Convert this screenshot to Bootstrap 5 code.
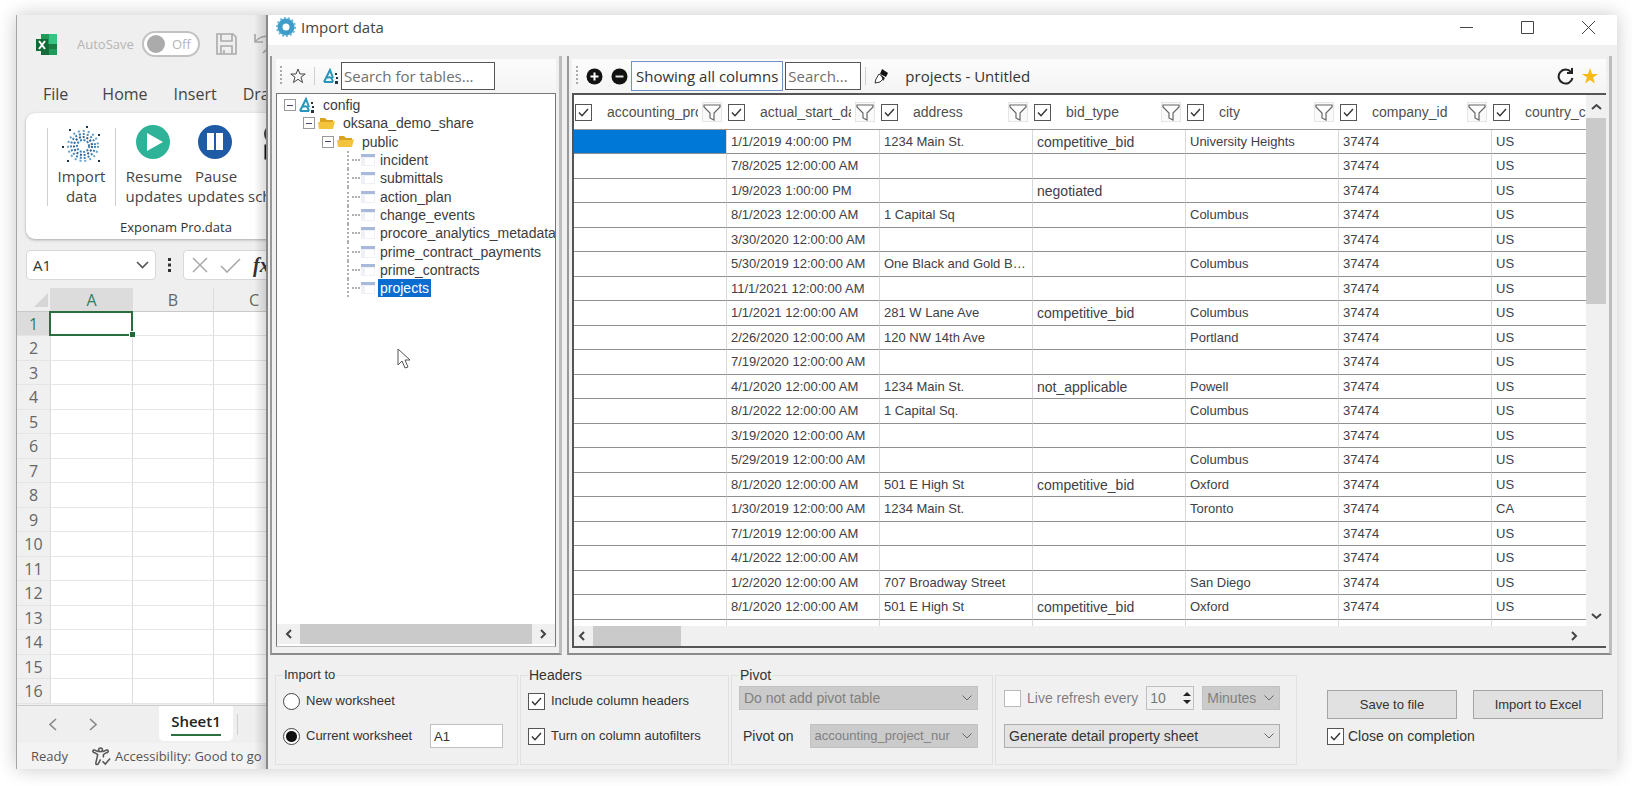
<!DOCTYPE html>
<html lang="en">
<head>
<meta charset="utf-8">
<meta name="viewport" content="width=device-width, initial-scale=1">
<title>Import data</title>
<link href="https://cdn.jsdelivr.net/npm/bootstrap@5.3.0/dist/css/bootstrap.min.css" rel="stylesheet">
<style>
:root{--ui:"Open Sans","Noto Sans",sans-serif;--grid:"Liberation Sans",Arial,sans-serif}
body{font-family:var(--ui);font-size:14px;line-height:18px;color:#333;background:#fff;padding:15px 15px 17px 16px}
button,input,select{font-family:inherit;font-size:inherit;line-height:inherit;color:inherit}
.frame{box-shadow:0 0 18px rgba(0,0,0,.22);background:#f0f0f0}
.mw0{min-width:0}.mh0{min-height:0}
svg{display:block;flex:none}

/* spreadsheet behind */
.book{width:250px;border-left:1px solid #a5a5a5;background:#efefef;position:relative}
.book::after{content:"";position:absolute;inset:0 0 0 auto;width:12px;background:linear-gradient(90deg,transparent,rgba(0,0,0,.14));pointer-events:none}
.topbar{height:58px;padding-left:19px;color:#b5b5b5;font-size:13px}
.topbar .cap{margin:0 8px 0 20px}
.autosave{width:58px;height:26px;border:2px solid #c2c2c2;border-radius:13px;background:#fff;padding:0 7px 0 3px;color:#b5b5b5}
.knob{width:18px;height:18px;border-radius:50%;background:#ababab}
.tabs{height:40px;padding:12px 0 0 26px;gap:26px;font-size:16px;color:#444}
.tabs a,.sheet a{color:inherit;text-decoration:none}
.ribbon{height:126px;margin-left:9px;background:#fff;border-radius:9px 0 0 9px;box-shadow:0 1px 3px rgba(0,0,0,.3);width:300px}
.ribbon button{border:0;background:none;padding:0;font-size:15px;line-height:20px;color:#444}
.ribbon .tools{padding:11px 0 0 21px}
.ribbon .tools svg{margin-bottom:2px}
.sep{width:1px;background:#cfcfcf}
.caption-line{font-size:13px;padding-top:12px;line-height:18px}
.fbar{padding:11px 0 0 9px;height:49px}
.namebox{width:130px;height:30px;border:1px solid #d8d8d8;border-radius:4px;background:#fff;padding:0 6px;font-size:15px;color:#333}
.fx{width:140px;height:30px;border:1px solid #d8d8d8;border-radius:4px;background:#fff}
.cells{table-layout:fixed;width:278px;border-collapse:separate;border-spacing:0;background:#fff}
.cells th{background:#f0f0f0;font-weight:400;font-size:16px;text-align:center;padding:0;color:#666;line-height:22px;border-right:1px solid #ddd;border-bottom:1px solid #e4e4e4}
.cells thead th{height:24px;border-bottom-color:#c9c9c9;background:#efefef}
.cells td{height:24px;padding:0;border-right:1px solid #dcdcdc;border-bottom:1px solid #e6e6e6}
.cells tbody tr:nth-child(2n) td{height:25px}
.cells .on{background:#dcdcdc;color:#2f7d63}
.cells td.pick{position:relative}
.pick::before{content:"";position:absolute;inset:-1px -1px -1px -2px;border:2px solid #2a6e3f}
.pick::after{content:"";position:absolute;right:-3px;bottom:-2px;width:5px;height:5px;background:#1f6b38;outline:1px solid #fff}
.sheet{height:38px;border-top:1px solid #ccc}
.sheet .active-tab{background:#fff;width:74px;height:35px;border-radius:0 0 5px 5px;font-size:15px;font-weight:600;color:#222;padding-top:5px}
.sheet .active-tab a{border-bottom:2px solid #2c7040;padding-bottom:3px;line-height:20px}
.sheet .rest{width:28px}
.status{font-size:13px;height:26px;color:#555;padding:0 0 0 14px;background:#f3f3f3}

/* dialog */
.dialog{border-left:2px solid #888;background:#f0f0f0}
.titlebar{height:31px;background:#fff;padding:0 22px 6px 8px;font-size:15px;color:#444}
.titlebar button,.plain{border:0;background:none;padding:0;color:#333}
.panes{padding:11px 5px 0 2px}
.pane{border:solid #bdbdbd;border-width:0 3px 2px 2px;border-left-color:#999;border-bottom-color:#8a8a8a}
.pane-l{width:292px;padding:3px 3px 6px 4px}
.pane-r{padding:3px 3px 5px 3px;margin-left:5px}
.bar{height:34px;background:linear-gradient(#fcfcfc,#f4f4f4);font-size:15px;color:#333}
.grip{width:2px;height:20px;background:repeating-linear-gradient(#aaa 0 2px,transparent 2px 4px)}
.find{border:1px solid #555;background:#fff;height:28px;padding:0 2px;border-radius:0;font-size:15px}
.find::placeholder{color:#707070;opacity:1}
.find.wide{width:154px;margin-left:2px}
.find.slim{width:76px;margin-left:2px}
.showing{height:30px;border:1px solid #6f93c4;background:#fbfdff;padding:0 4px;margin-left:3px;white-space:nowrap}
.treebox{border:1px solid #777;border-bottom-color:#bbb;background:#fff;padding-bottom:2px}
.tree{font-family:var(--grid);font-size:14px;line-height:18px;color:#3c3c3c;list-style:none;margin:0;padding:2px 0 0 7px;white-space:nowrap}
.tree li{height:18px;display:flex;align-items:center}
.tree li:nth-child(3n){height:19px}
.tree .l1{padding-left:19px}.tree .l2{padding-left:38px}
.tree .leaf{margin-left:63px;border-left:2px dotted #b0b0b0;padding-left:3px}
.tree .leaf::before{content:"";width:8px;border-top:2px dotted #b0b0b0;margin-right:1px;flex:none}
.tree .leaf span{padding:0 2px;margin-left:3px}
.tree .leaf .cur{background:#0a6cd0;color:#fff}
.exp{width:12px;height:12px;border:1px solid #999;padding:0;background:#fff;display:flex;align-items:center;margin-right:3px}
.exp::before{content:"";height:1px;background:#447;flex:1;margin:0 2px}
.hs{height:20px;background:#f0f0f0;padding:0 8px}
.thumb{background:#cacaca}
.gridbox{border:solid #555;border-width:2px 0 2px 2px}
.dg{font-family:var(--grid);table-layout:fixed;width:1071px;border-collapse:separate;border-spacing:0;font-size:13px;line-height:18px;color:#404048}
.dg th{height:35px;font-size:14px;font-weight:400;padding:0 5px 0 1px;border-bottom:1px solid #999;color:#505050}
.dg th label{overflow:hidden;white-space:nowrap;margin:0 4px 0 15px}
.dg td{height:24px;padding:0 5px 0 4px;border-bottom:1px solid #8f8f8f;border-right:1px solid #d8d8d8;overflow:hidden;text-overflow:ellipsis;white-space:nowrap}
.dg tbody tr:nth-child(2n) td{height:25px}
.dg td:nth-child(4){font-size:14px}
.dg td.sel{background:#0078d7}
.fun{width:20px;height:20px;border:1px solid #e6e6e6;background:#fafafa;padding:0;display:flex;justify-content:center}
.vs{width:20px;background:#f0f0f0;padding:8px 0 6px}
.tick{appearance:none;flex:none;width:17px;height:17px;margin:0;border:1px solid #555;background:#fff}
.tick:checked{background:#fff url("data:image/svg+xml,%3Csvg xmlns='http://www.w3.org/2000/svg' viewBox='0 0 15 15'%3E%3Cpath d='M3 7.5l3 3.2L12 4' fill='none' stroke='%23333' stroke-width='1.4'/%3E%3C/svg%3E")}
.tick:disabled{border-color:#bbb}
.dot{appearance:none;flex:none;width:17px;height:17px;margin:0;border:1px solid #444;border-radius:50%;background:#fff}
.dot:checked{background:radial-gradient(circle,#111 0 5px,#fff 6px)}

/* options */
.opts{font-family:var(--grid);font-size:14px;color:#333;padding:11px 14px 4px 7px}
fieldset.grp{border:1px solid #e1e1e1;margin:9px 2px 0 0;padding:0;height:90px;position:relative}
.grp legend{font-size:14px;line-height:18px;width:auto;float:none;margin:-10px 0 0 7px;padding:0 1px;position:absolute;background:#f0f0f0}
.small-txt,.small-txt .fit{font-size:13px}
.grp .body{padding:13px 6px 0 7px}
.grp .high{padding-top:10px}
.line{height:24px;margin-bottom:11px}
.high .line{margin-bottom:14px}
.line label{margin-left:6px;white-space:nowrap}
.cmb{appearance:none;height:24px;border:1px solid #acacac;border-radius:0;background:#e3e3e3 url("data:image/svg+xml,%3Csvg xmlns='http://www.w3.org/2000/svg' width='12' height='8'%3E%3Cpath d='M1.5 1.5L6 6l4.5-4.5' fill='none' stroke='%23666'/%3E%3C/svg%3E") no-repeat right 4px center;padding:0 16px 0 4px;min-width:0}
.cmb:disabled{background-color:#cbcbcb;border-color:#c2c2c2;color:#808080;opacity:1}
.cmb.col-pick{font-size:13px}
.box{border:1px solid #c0c0c0;background:#fff;height:24px;padding:0 3px}
.num{appearance:textfield;width:34px;border:0;background:transparent;padding:0 3px;color:#777}
.num::-webkit-inner-spin-button{display:none}
.act{width:130px;height:29px;border:1px solid #a5a5a5;background:#e1e1e1;font-size:13px;color:#333}
.pointer{position:absolute;left:129px;top:333px}
</style>
</head>
<body class="vh-100 overflow-hidden">
<div class="frame h-100 d-flex overflow-hidden">

<section class="book d-flex flex-column flex-shrink-0 overflow-hidden">
  <div class="topbar d-flex align-items-center flex-shrink-0">
    <svg width="21" height="21" viewBox="0 0 21 21"><path d="M5 0h16v21H5z" fill="#1f9a58"/><path d="M13 0h8v10h-8z" fill="#35c481"/><path d="M5 10h8v11H5z" fill="#176b3c"/><path d="M13 10h8v5h-8z" fill="#1d7a45"/><path d="M0 5h12v12H0z" fill="#0f6a36"/><path d="M3 7l6 8M9 7l-6 8" stroke="#fff" stroke-width="2"/></svg>
    <span class="cap text-nowrap" id="as">AutoSave</span>
    <button class="autosave d-flex align-items-center justify-content-between flex-shrink-0" aria-labelledby="as"><span class="knob"></span>Off</button>
    <svg class="ms-3" width="21" height="22" viewBox="0 0 21 22" fill="none" stroke="#aaa" stroke-width="1.600"><path d="M1 1h16l3 3v17H1zM5 1v7h11V1M5 21v-8h11v8M8 17v4"/></svg>
    <svg class="ms-3" width="24" height="24" viewBox="0 0 24 24" fill="none" stroke="#aaa" stroke-width="1.700"><path d="M2 2v8h8M2 10C8 3 16 3 18 8s-4 9-8 13"/></svg>
  </div>
  <nav class="tabs d-flex flex-shrink-0"><a class="me-2" href="#">File</a><a href="#">Home</a><a href="#">Insert</a><a href="#">Draw</a></nav>
  <div class="ribbon flex-shrink-0">
    <div class="tools d-flex">
      <i class="sep mt-1"></i>
      <button style="width:67px"><svg class="mx-auto" width="40" height="40" viewBox="0 0 40 40" fill="none" stroke="#3d7fb5"><g stroke-width="2"><circle cx="21" cy="22" r="6" stroke-dasharray="2 1.500"/><circle cx="21" cy="22" r="9" stroke-dasharray="2 1.800" stroke="#315f8f"/><circle cx="21" cy="22" r="12" stroke-dasharray="2 2"/><circle cx="21" cy="22" r="15" stroke-dasharray="2 3" stroke="#67a3ce"/></g><path d="M25 2v2M8 5v2M37 10v2M1 22v2M37 36v2M6 36v2" stroke="#234" stroke-width="2"/></svg>Import<br>data</button>
      <i class="sep mt-1"></i>
      <button class="ms-2" style="width:60px"><svg class="mx-auto" width="40" height="40" viewBox="0 0 40 40"><circle cx="19" cy="18" r="17" fill="#2eb398"/><path d="M13 9v18l16-9z" fill="#fff"/></svg>Resume<br>updates</button>
      <button style="width:64px"><svg class="mx-auto" width="40" height="40" viewBox="0 0 40 40"><circle cx="19" cy="18" r="17" fill="#1f5aa6"/><path d="M11 9h7v17h-7zM20 9h7v17h-7z" fill="#fff"/></svg>Pause<br>updates</button>
      <button style="width:60px"><svg class="mx-auto" width="40" height="40" viewBox="0 0 40 40" fill="none" stroke="#444" stroke-width="2"><circle cx="16" cy="10" r="9"/><path d="M8 22h24v12H8z" stroke="#111" stroke-width="3"/></svg>Set<br>schedule</button>
    </div>
    <div class="caption-line text-center">Exponam Pro.data</div>
  </div>
  <div class="fbar d-flex flex-shrink-0">
    <button class="namebox d-flex align-items-center justify-content-between flex-shrink-0">A1<svg width="13" height="8" viewBox="0 0 13 8" fill="none" stroke="#555" stroke-width="1.600"><path d="M1 1l5.500 5.500L12 1"/></svg></button>
    <svg class="mx-2 mt-2" width="11" height="14" viewBox="0 0 11 14" fill="#333"><path d="M4 0h3v3H4zM4 5.500h3v3H4zM4 11h3v3H4z"/></svg>
    <div class="fx d-flex align-items-center flex-shrink-0 ps-2 gap-2">
      <svg width="16" height="16" viewBox="0 0 16 16" stroke="#aaa" stroke-width="1.500"><path d="M1 1l14 14M15 1L1 15"/></svg>
      <svg class="ms-1" width="21" height="15" viewBox="0 0 21 15" fill="none" stroke="#aaa" stroke-width="1.600"><path d="M1 8l6 6L20 1"/></svg>
      <span class="ms-1 fs-5 fst-italic fw-bold" style="font-family:'Liberation Serif',serif">fx</span>
    </div>
  </div>
  <div class="flex-fill mh0 overflow-hidden"><table class="cells" id="cells"><colgroup><col style="width:34px"><col style="width:82px"><col style="width:81px"><col></colgroup>
    <thead><tr><th><svg class="ms-auto" width="18" height="18" viewBox="0 0 18 18"><path d="M16 2v14H2z" fill="#d6d6d6"/></svg></th><th class="on">A</th><th>B</th><th>C</th></tr></thead><tbody></tbody></table></div>
  <div class="sheet d-flex flex-shrink-0">
    <button class="plain ps-4 ms-2" aria-label="Previous sheet"><svg width="8" height="13" viewBox="0 0 8 13" fill="none" stroke="#888" stroke-width="1.600"><path d="M7 1L1 6.500 7 12"/></svg></button>
    <button class="plain ps-4 ms-2" aria-label="Next sheet"><svg width="8" height="13" viewBox="0 0 8 13" fill="none" stroke="#888" stroke-width="1.600"><path d="M1 1l6 5.500L1 12"/></svg></button>
    <div class="active-tab text-center ms-auto"><a href="#">Sheet1</a></div><i class="sep my-2 ms-1"></i><span class="rest"></span>
  </div>
  <div class="status d-flex align-items-center flex-shrink-0 text-nowrap"><span>Ready</span>
    <svg class="ms-4 me-1" width="19" height="19" viewBox="0 0 20 20" fill="none" stroke="#555" stroke-width="1.600"><circle cx="9" cy="3" r="2"/><path d="M7 5L2 3C0 4 1 6 3 6l3 2-2 9c0 2 2 2 3 0l2-4M11 5l5-2c2 1 1 3-1 3l-3 2v3M11 15l3 3 5-6"/></svg>Accessibility: Good to go</div>
</section>

<main class="dialog d-flex flex-column flex-fill mw0 position-relative">
  <header class="titlebar d-flex align-items-center">
    <svg width="21" height="21" viewBox="0 0 21 21" fill="none"><circle cx="10" cy="10" r="6" stroke="#3d9cc8" stroke-width="5"/><circle cx="10" cy="10" r="9" stroke="#6ab8dc" stroke-width="2" stroke-dasharray="2 2"/></svg>
    <span class="ms-1 me-auto">Import data</span>
    <button aria-label="Minimize"><svg width="13" height="13" viewBox="0 0 13 13" stroke="#444"><path d="M0 6.500h13"/></svg></button>
    <button class="mx-5" aria-label="Maximize"><svg width="13" height="13" viewBox="0 0 13 13" stroke="#444" fill="none"><path d="M.5.5h12v12H.5z"/></svg></button>
    <button aria-label="Close"><svg width="13" height="13" viewBox="0 0 13 13" stroke="#444"><path d="M0 0l13 13M13 0L0 13"/></svg></button>
  </header>

  <div class="panes d-flex flex-fill mh0">
    <section class="pane pane-l d-flex flex-column flex-shrink-0">
      <div class="bar d-flex align-items-center ps-1 flex-shrink-0">
        <i class="grip"></i>
        <button class="plain ms-2" aria-label="Favorites"><svg width="16" height="16" viewBox="0 0 16 16" fill="none" stroke="#444"><path d="M8 1l2 5h5.200L11 9.200l1.600 5.300L8 11.300l-4.600 3.200L5 9.200.8 6H6z"/></svg></button>
        <i class="sep ms-2 my-2 align-self-stretch"></i>
        <svg class="ms-2" width="16" height="17" viewBox="0 0 16 17" fill="none"><path d="M1 14L7 2l3 8M1 14h9M4 10c3-2 5 0 6 4" stroke="#2796bd" stroke-width="2"/><path d="M12 5h2v2h-2zM13 9h2v2h-2zM12 13h3v3h-3z" fill="#234"/></svg>
        <input class="find wide" placeholder="Search for tables..." aria-label="Search for tables">
      </div>
      <div class="treebox d-flex flex-column flex-fill mh0">
        <ul class="tree flex-fill overflow-hidden" id="tree"></ul>
        <div class="hs d-flex align-items-center">
          <svg width="7" height="10" viewBox="0 0 7 10" fill="none" stroke="#444" stroke-width="2"><path d="M6 1L2 5l4 4"/></svg>
          <div class="thumb flex-fill align-self-stretch mx-2"></div>
          <svg width="7" height="10" viewBox="0 0 7 10" fill="none" stroke="#444" stroke-width="2"><path d="M1 1l4 4-4 4"/></svg>
        </div>
      </div>
    </section>

    <section class="pane pane-r d-flex flex-column flex-fill mw0">
      <div class="bar d-flex align-items-center ps-1 pe-2 flex-shrink-0">
        <i class="grip"></i>
        <button class="plain ms-2" aria-label="Check all"><svg width="17" height="17" viewBox="0 0 17 17"><circle cx="8.500" cy="8.500" r="8" fill="#111"/><path d="M8.500 4.500v8M4.500 8.500h8" stroke="#fff" stroke-width="2"/></svg></button>
        <button class="plain ms-2" aria-label="Uncheck all"><svg width="17" height="17" viewBox="0 0 17 17"><circle cx="8.500" cy="8.500" r="8" fill="#111"/><path d="M4.500 8.500h8" stroke="#ddd" stroke-width="2"/></svg></button>
        <button class="showing">Showing all columns</button>
        <input class="find slim" placeholder="Search..." aria-label="Search columns">
        <i class="sep ms-1 my-2 align-self-stretch"></i>
        <button class="plain ms-2" aria-label="Rename"><svg width="15" height="15" viewBox="0 0 15 15"><path d="M8 0l6 4-2 4-6-3z" fill="#111"/><path d="M5 5l5 4-4 4-5 1 1-4z" fill="#fff" stroke="#333"/><path d="M7 6l4 3-2 3z" fill="#222"/></svg></button>
        <span class="ms-3 me-auto text-nowrap">projects - Untitled</span>
        <button class="plain me-2" aria-label="Refresh"><svg width="17" height="17" viewBox="0 0 17 17" fill="none" stroke="#222" stroke-width="2"><path d="M14 4A7 7 0 1 0 15.500 10M15 0v5h-5"/></svg></button>
        <button class="plain" aria-label="Favorite"><svg width="16" height="16" viewBox="0 0 16 16"><path d="M8 0l2 6h6l-5 3.500 2 6L8 12l-5 3.500 2-6L0 6h6z" fill="#f8b912"/></svg></button>
      </div>
      <div class="gridbox d-flex flex-column flex-fill mh0">
        <div class="d-flex flex-fill mh0">
          <div class="bg-white flex-fill overflow-hidden mw0"><table class="dg" id="dg"><thead><tr></tr></thead><tbody></tbody></table></div>
          <div class="vs d-flex flex-column align-items-center flex-shrink-0">
            <svg width="11" height="7" viewBox="0 0 11 7" fill="none" stroke="#444" stroke-width="2"><path d="M1 6l4.500-4L10 6"/></svg>
            <div class="thumb w-100 mt-2" style="height:36%"></div>
            <svg class="mt-auto" width="11" height="7" viewBox="0 0 11 7" fill="none" stroke="#444" stroke-width="2"><path d="M1 1l4.500 4L10 1"/></svg>
          </div>
        </div>
        <div class="hs d-flex align-items-center flex-shrink-0 ps-1 pe-4">
          <svg width="7" height="10" viewBox="0 0 7 10" fill="none" stroke="#444" stroke-width="2"><path d="M6 1L2 5l4 4"/></svg>
          <div class="thumb align-self-stretch ms-2 me-auto" style="width:88px"></div>
          <svg class="me-1" width="7" height="10" viewBox="0 0 7 10" fill="none" stroke="#444" stroke-width="2"><path d="M1 1l4 4-4 4"/></svg>
        </div>
      </div>
    </section>
  </div>

  <form class="opts d-flex flex-shrink-0">
    <fieldset class="grp small-txt" style="width:243px"><legend class="fit">Import to</legend><div class="body">
      <div class="line d-flex align-items-center"><input class="dot" type="radio" name="dest" id="nw"><label for="nw">New worksheet</label></div>
      <div class="line d-flex align-items-center"><input class="dot" type="radio" name="dest" id="cw" checked><label for="cw">Current worksheet</label><input class="box ms-auto me-2" style="width:73px" value="A1" aria-label="Cell"></div>
    </div></fieldset>
    <fieldset class="grp small-txt" style="width:209px"><legend>Headers</legend><div class="body">
      <div class="line d-flex align-items-center"><input class="tick" type="checkbox" id="ich" checked><label for="ich">Include column headers</label></div>
      <div class="line d-flex align-items-center"><input class="tick" type="checkbox" id="caf" checked><label for="caf">Turn on column autofilters</label></div>
    </div></fieldset>
    <fieldset class="grp" style="width:262px"><legend>Pivot</legend><div class="body high">
      <div class="line d-flex"><select class="cmb w-100 me-2" disabled aria-label="Pivot table"><option>Do not add pivot table</option></select></div>
      <div class="line d-flex align-items-center"><label class="ms-1 me-3" for="pv">Pivot on</label><select class="cmb col-pick flex-fill me-2 w-50" id="pv" disabled><option>accounting_project_nur</option></select></div>
    </div></fieldset>
    <fieldset class="grp" style="width:302px"><div class="body high ps-2 pe-3">
      <div class="line d-flex align-items-center"><input class="tick" type="checkbox" id="lr" disabled><label for="lr" class="text-black-50">Live refresh every</label>
        <span class="box d-flex ms-2 bg-transparent p-0"><input class="num" type="number" value="10" disabled aria-label="Interval"><svg width="12" height="22" viewBox="0 0 12 22" fill="#222"><path d="M2 9l4-4 4 4zM2 13l4 4 4-4z"/></svg></span>
        <select class="cmb ms-2 flex-fill" disabled aria-label="Unit"><option>Minutes</option></select></div>
      <div class="line d-flex"><select class="cmb w-100" aria-label="Detail"><option>Generate detail property sheet</option></select></div>
    </div></fieldset>
    <div class="ms-auto pt-3">
      <div class="d-flex gap-3 mt-2"><button type="button" class="act">Save to file</button><button type="button" class="act">Import to Excel</button></div>
      <div class="d-flex align-items-center mt-2"><input class="tick" type="checkbox" id="cl" checked><label class="ms-1" for="cl">Close on completion</label></div>
    </div>
  </form>
  <svg class="pointer" width="15" height="22" viewBox="0 0 15 22" fill="#fff" stroke="#555"><path d="M1 1v16l4-4 3 7 3-1-3-7h5z"/></svg>
</main>
</div>

<script>
// spreadsheet rows
document.querySelector('#cells tbody').innerHTML = Array.from({length: 16}, (_, i) =>
  `<tr><th class="${i ? '' : 'on'}">${i + 1}</th><td class="${i ? '' : 'pick'}"></td><td></td><td></td></tr>`).join('');

// share tree
const drop = '<svg width="16" height="17" viewBox="0 0 16 17" fill="none"><path d="M1 14L7 2l3 8M1 14h9M4 10c3-2 5 0 6 4" stroke="#2796bd" stroke-width="2"/><path d="M12 5h2v2h-2zM13 9h2v2h-2zM12 13h3v3h-3z" fill="#234"/></svg>';
const folder = '<svg width="17" height="13" viewBox="0 0 17 13"><path d="M2 1h5l2 2h6v8H2z" fill="#d9a520"/><path d="M0 5h14l3-1-2 8H1z" fill="#f3c33c"/></svg>';
const sheet = '<svg width="14" height="12" viewBox="0 0 14 12"><path d="M0 0h14v12H0z" fill="#eef0f5"/><path d="M0 0h14v3H0z" fill="#a9b9dc"/><path d="M4 4h9v7H4z" fill="#fff"/></svg>';
const node = (cls, icon, name) => `<li class="${cls}"><button class="exp" aria-label="Collapse"></button>${icon}<span class="ps-1 ms-1">${name}</span></li>`;
document.getElementById('tree').innerHTML = node('', drop, 'config') + node('l1', folder, 'oksana_demo_share') + node('l2', folder, 'public') +
  ['incident', 'submittals', 'action_plan', 'change_events', 'procore_analytics_metadata', 'prime_contract_payments', 'prime_contracts', 'projects']
  .map(n => `<li class="leaf">${sheet}<span class="${n === 'projects' ? 'cur' : ''}">${n}</span></li>`).join('');

// data grid
const heads = ['accounting_project_number', 'actual_start_date', 'address', 'bid_type', 'city', 'company_id', 'country_code'];
document.querySelector('#dg thead tr').innerHTML = heads.map((h, i) =>
  `<th><div class="d-flex align-items-center"><input class="tick" type="checkbox" id="c${i}" checked><label for="c${i}">${h}</label><button class="fun ms-auto flex-shrink-0" aria-label="Filter ${h}"><svg width="18" height="18" viewBox="0 0 18 18" fill="#fff" stroke="#666" stroke-width="1.200"><path d="M1 2h16v2l-6 6v7l-4-2v-5L1 4z"/></svg></button></div></th>`).join('');
const T = ' 12:00:00 AM';
const rows = [
  ['1/1/2019 4:00:00 PM', '1234 Main St.', 'competitive_bid', 'University Heights'],
  ['7/8/2025' + T], ['1/9/2023 1:00:00 PM', '', 'negotiated'],
  ['8/1/2023' + T, '1 Capital Sq', '', 'Columbus'], ['3/30/2020' + T],
  ['5/30/2019' + T, 'One Black and Gold Blvd', '', 'Columbus'], ['11/1/2021' + T],
  ['1/1/2021' + T, '281 W Lane Ave', 'competitive_bid', 'Columbus'],
  ['2/26/2020' + T, '120 NW 14th Ave', '', 'Portland'], ['7/19/2020' + T],
  ['4/1/2020' + T, '1234 Main St.', 'not_applicable', 'Powell'],
  ['8/1/2022' + T, '1 Capital Sq.', '', 'Columbus'], ['3/19/2020' + T],
  ['5/29/2019' + T, '', '', 'Columbus'],
  ['8/1/2020' + T, '501 E High St', 'competitive_bid', 'Oxford'],
  ['1/30/2019' + T, '1234 Main St.', '', 'Toronto', 'CA'],
  ['7/1/2019' + T], ['4/1/2022' + T],
  ['1/2/2020' + T, '707 Broadway Street', '', 'San Diego'],
  ['8/1/2020' + T, '501 E High St', 'competitive_bid', 'Oxford'],
  ['1/31/2021' + T]
];
document.querySelector('#dg tbody').innerHTML = rows.map((r, i) =>
  `<tr><td class="${i ? '' : 'sel'}"></td>` + [r[0], r[1] || '', r[2] || '', r[3] || '', '37474', r[4] || 'US'].map(v => `<td>${v}</td>`).join('') + '</tr>').join('');
</script>
<script src="https://cdn.jsdelivr.net/npm/bootstrap@5.3.0/dist/js/bootstrap.bundle.min.js"></script>
</body>
</html>
